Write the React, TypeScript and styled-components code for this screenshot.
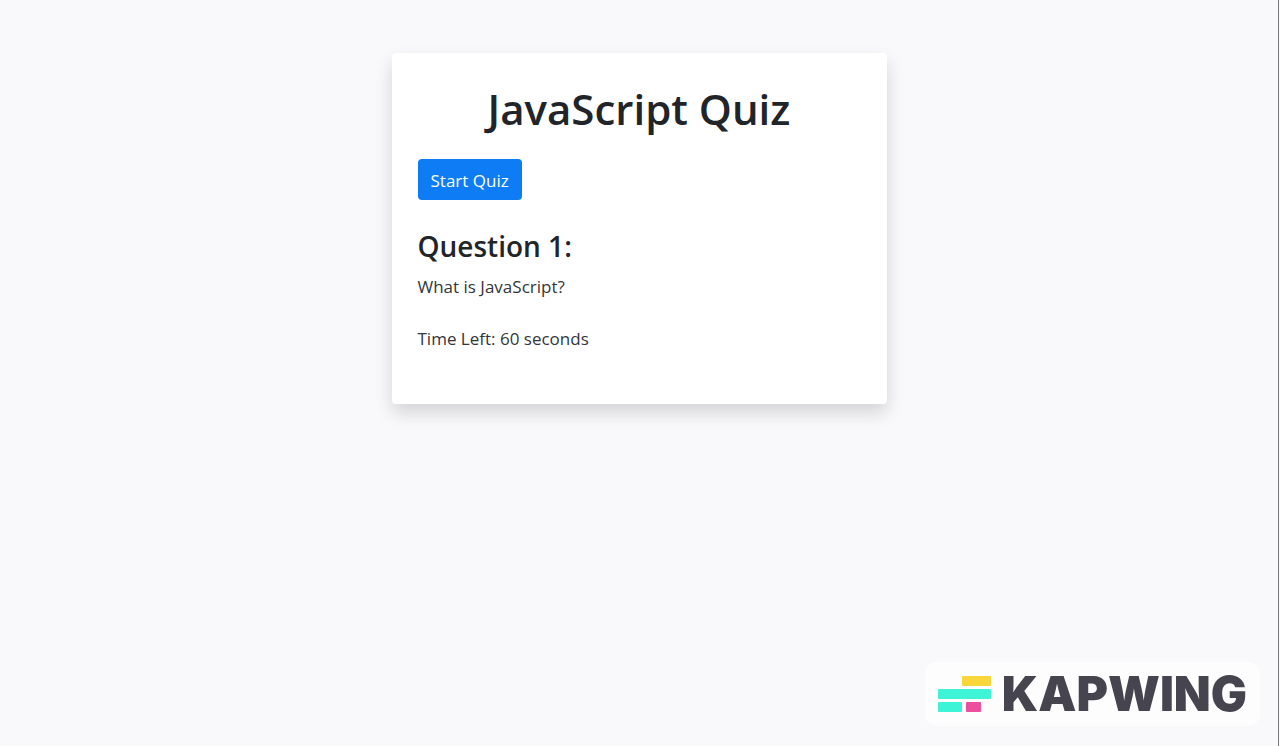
import React from "react";
import styled, { createGlobalStyle } from "styled-components";

const GlobalStyle = createGlobalStyle`
  *, *::before, *::after { box-sizing: border-box; }
  body {
    margin: 0;
    background: #f9f9fc;
    color: #212529;
    font-family: "Segoe UI", "Open Sans", "Noto Sans", sans-serif;
    font-size: 17px;
    line-height: 26px;
  }
`;

const Page = styled.div`
  min-height: 100vh;
  display: flex;
  flex-direction: column;
  align-items: center;
  padding: 53px 20px 20px;
  margin-right: 1px;
  border-right: 1px solid #7c7c7e;
`;

const Card = styled.main`
  width: 100%;
  max-width: 495px;
  padding: 26px 26px 52px;
  background: #fff;
  border-radius: 4px;
  box-shadow: 0 9px 18px rgba(0, 0, 0, 0.15);
`;

const Title = styled.h1`
  margin: 0 0 20px;
  font-size: 42px;
  font-weight: 600;
  line-height: 60px;
  text-align: center;
`;

const StartButton = styled.button`
  display: block;
  height: 41px;
  padding: 2px 13px 0;
  border: 0;
  border-radius: 4px;
  background: #0d7cf5;
  color: #fff;
  font: inherit;
  cursor: pointer;
`;

const Question = styled.section`
  margin: 26px 0;
`;

const QuestionTitle = styled.h2`
  margin: 0 0 8px;
  font-size: 28px;
  font-weight: 600;
  line-height: 40px;
`;

const Text = styled.p`
  margin: 0;
  color: #33363a;
`;

const Watermark = styled.div`
  position: fixed;
  right: 20px;
  bottom: 20px;
  display: flex;
  align-items: center;
  gap: 11px;
  height: 64px;
  padding: 0 13px;
  border-radius: 12px;
  background: #fdfdfe;
`;

const Wordmark = styled.span`
  color: #45444f;
  font-family: Inter, sans-serif;
  font-size: 48px;
  font-weight: 900;
  line-height: 64px;
`;

const LogoMark = () => (
  <svg width="53" height="36" viewBox="0 0 53 36" aria-hidden="true">
    <rect x="24" width="29" height="10" rx="1" fill="#f9d73b" />
    <rect y="13" width="53" height="10" rx="1" fill="#3df5d6" />
    <rect y="26" width="24" height="10" rx="1" fill="#3df5d6" />
    <rect x="28" y="26" width="15" height="10" rx="1" fill="#ec4f9d" />
  </svg>
);

export default function App() {
  return (
    <>
      <GlobalStyle />
      <Page>
        <Card>
          <Title>JavaScript Quiz</Title>
          <StartButton type="button">Start Quiz</StartButton>
          <Question>
            <QuestionTitle>Question 1:</QuestionTitle>
            <Text>What is JavaScript?</Text>
          </Question>
          <Text>Time Left: 60 seconds</Text>
        </Card>
      </Page>
      <Watermark>
        <LogoMark />
        <Wordmark>KAPWING</Wordmark>
      </Watermark>
    </>
  );
}
